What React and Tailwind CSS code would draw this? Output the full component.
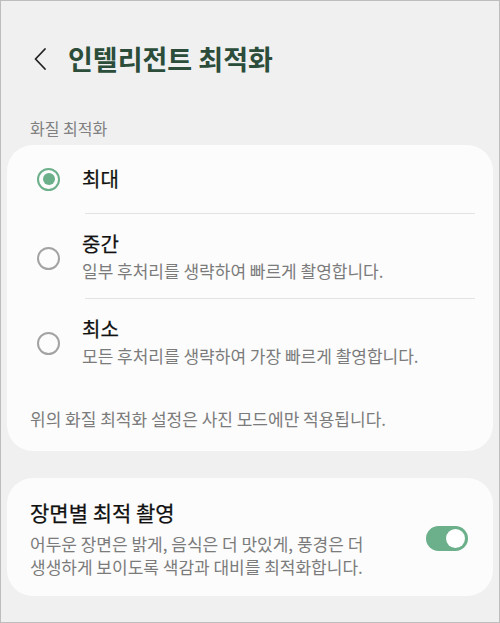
import React from "react";

const FONT = { fontFamily: '"Noto Sans CJK KR", "Noto Sans", sans-serif' };

function Radio({ checked }) {
  if (checked) {
    return (
      <span className="flex h-[23px] w-[23px] shrink-0 items-center justify-center rounded-full border-[2.5px] border-[#6bb08a]">
        <span className="h-[12px] w-[12px] rounded-full bg-[#6bb08a]" />
      </span>
    );
  }
  return <span className="h-[23px] w-[23px] shrink-0 rounded-full border-2 border-[#a3a3a3]" />;
}

function Option({ checked, title, desc, className }) {
  return (
    <div className={"flex items-center pl-[30px] " + className}>
      <Radio checked={checked} />
      <div className="ml-[22px]">
        <div className="text-[20px] leading-[26px] text-[#111] [-webkit-text-stroke:0.25px_#111]">{title}</div>
        {desc && <div className="text-[17px] leading-[28px] text-[#7b7b7b]">{desc}</div>}
      </div>
    </div>
  );
}

export default function App() {
  return (
    <div
      className="h-[623px] w-[500px] overflow-hidden border border-[#bdbdbd] bg-[#f0f0f0] pt-[41px] break-keep"
      style={FONT}
    >
      {/* header */}
      <div className="flex h-[34px] items-center">
        <svg className="ml-[32px]" width="14" height="24" viewBox="0 0 14 24" fill="none">
          <path d="M12 2 L2.5 12 L12 22" stroke="#222" strokeWidth="1.8" strokeLinecap="round" strokeLinejoin="round" />
        </svg>
        <h1 className="ml-[21px] text-[27px] font-bold leading-[34px] text-[#2b4d3a]">인텔리전트 최적화</h1>
      </div>

      <div className="mt-[42px] pl-[29px] text-[16px] leading-[20px] text-[#808080]">화질 최적화</div>

      {/* quality card */}
      <div className="mx-[6px] mt-[7px] rounded-[26px] bg-[#fcfcfc] pb-[20px]">
        <Option checked title="최대" className="h-[68px]" />
        <div className="ml-[78px] mr-[18px] h-px bg-[#e3e3e3]" />
        <Option title="중간" desc="일부 후처리를 생략하여 빠르게 촬영합니다." className="pt-[17px] pb-[13px]" />
        <div className="ml-[78px] mr-[18px] h-px bg-[#e3e3e3]" />
        <Option title="최소" desc="모든 후처리를 생략하여 가장 빠르게 촬영합니다." className="pt-[17px] pb-[13px]" />
        <div className="mt-[24px] pl-[23px] text-[17px] leading-[24px] text-[#7b7b7b]">
          위의 화질 최적화 설정은 사진 모드에만 적용됩니다.
        </div>
      </div>

      {/* scene card */}
      <div className="mx-[6px] mt-[27px] flex items-center justify-between rounded-[26px] bg-[#fcfcfc] pt-[20px] pb-[18px] pl-[23px] pr-[25px]">
        <div className="w-[385px]">
          <div className="text-[21px] leading-[28px] text-[#111] [-webkit-text-stroke:0.25px_#111]">장면별 최적 촬영</div>
          <div className="mt-[6px] text-[17px] leading-[23px] text-[#7b7b7b]">
            어두운 장면은 밝게, 음식은 더 맛있게, 풍경은 더 생생하게 보이도록 색감과 대비를 최적화합니다.
          </div>
        </div>
        <div className="flex h-[25px] w-[42px] shrink-0 items-center justify-end rounded-full bg-[#6bb08a] pr-[3px]">
          <span className="h-[19px] w-[19px] rounded-full bg-white" />
        </div>
      </div>
    </div>
  );
}
